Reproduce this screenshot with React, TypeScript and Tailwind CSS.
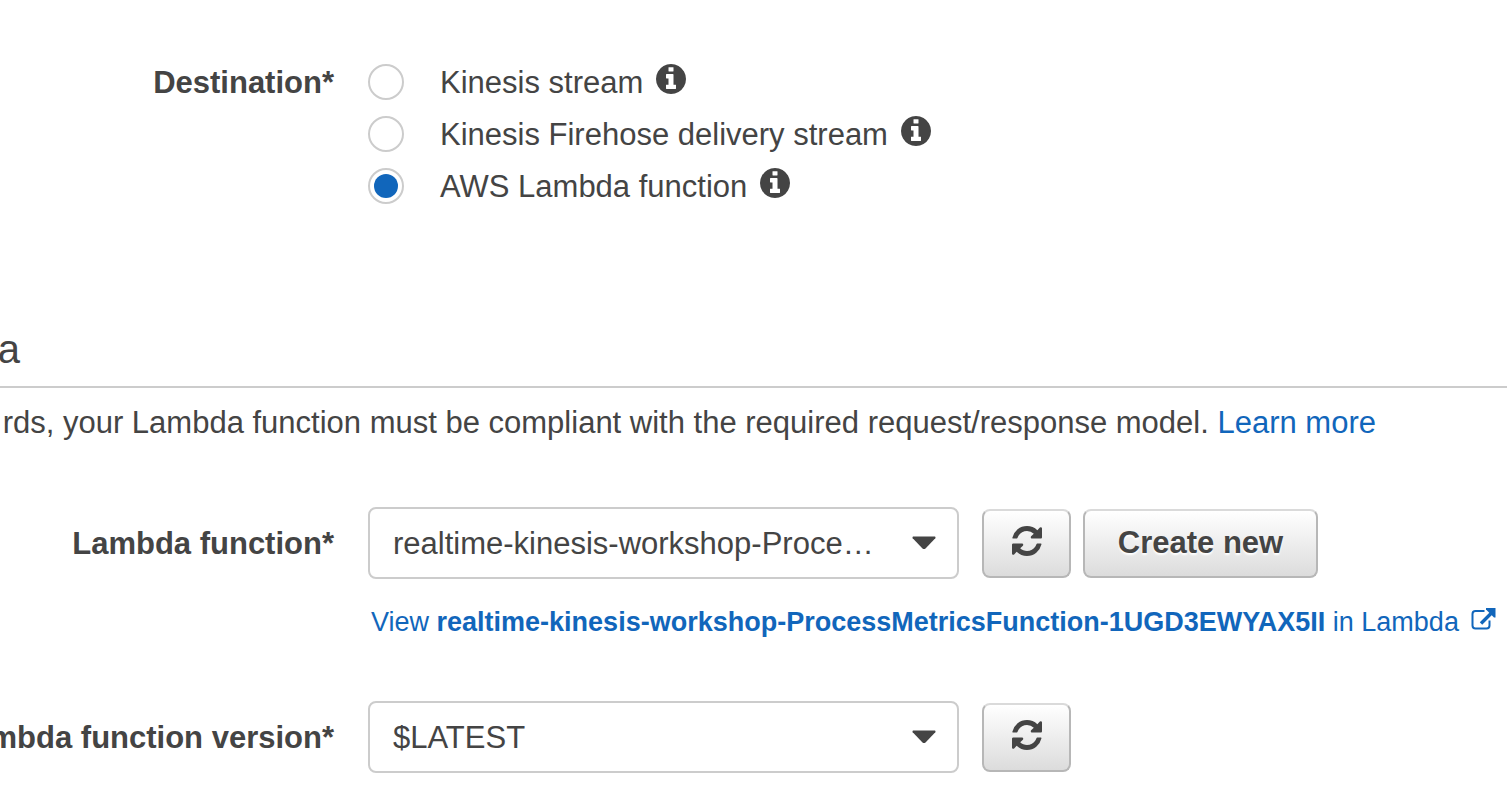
import type { ReactNode } from "react";

function InfoIcon() {
  return (
    <svg viewBox="0 128 1536 1536" className="mb-1.5 size-[30px] shrink-0" fill="currentColor" aria-hidden="true">
      <path d="M1024 1376v-160q0-14-9-23t-23-9h-96v-512q0-14-9-23t-23-9h-320q-14 0-23 9t-9 23v160q0 14 9 23t23 9h96v320h-96q-14 0-23 9t-9 23v160q0 14 9 23t23 9h448q14 0 23-9t9-23zm-128-896v-160q0-14-9-23t-23-9h-192q-14 0-23 9t-9 23v160q0 14 9 23t23 9h192q14 0 23-9t9-23zm640 416q0 209-103 385.5t-279.5 279.5-385.5 103-385.5-103-279.5-279.5-103-385.5 103-385.5 279.5-279.5 385.5-103 385.5 103 279.5 279.5 103 385.5z" />
    </svg>
  );
}

function RefreshIcon() {
  return (
    <svg viewBox="0 128 1536 1536" className="mb-1 size-[30px]" fill="currentColor" aria-hidden="true">
      <path d="M1511 1056q0 5-1 7-64 268-268 434.5t-478 166.5q-146 0-282.5-55t-243.5-157l-129 129q-19 19-45 19t-45-19-19-45v-448q0-26 19-45t45-19h448q26 0 45 19t19 45-19 45l-137 137q71 66 161 102t187 36q134 0 250-65t186-179q11-17 53-117 8-23 30-23h192q13 0 22.5 9.5t9.5 22.5zm25-800v448q0 26-19 45t-45 19h-448q-26 0-45-19t-19-45 19-45l138-138q-148-137-349-137-134 0-250 65t-186 179q-11 17-53 117-8 23-30 23h-199q-13 0-22.5-9.5t-9.5-22.5v-7q65-268 270-434.5t480-166.5q146 0 284 55.5t245 156.5l130-129q19-19 45-19t45 19 19 45z" />
    </svg>
  );
}

function ExternalIcon() {
  return (
    <svg viewBox="0 0 25 24" className="mb-1 h-6 w-[25px] shrink-0" fill="none" stroke="currentColor" aria-hidden="true">
      <path d="M13.500 4H4.500Q1.500 4 1.500 7v11.500q0 3 3 3h11q3 0 3-3v-5" strokeWidth="2" />
      <path d="M10 16.500 20 6.500" strokeWidth="3.400" />
      <path d="M15 1h9.500v9.500h-1.500l-8-8z" fill="currentColor" stroke="none" />
    </svg>
  );
}

function Row({ label, children }: { label: ReactNode; children: ReactNode }) {
  return (
    <div className="grid grid-cols-[334px_1fr] gap-x-[34px]">
      <div className="flex justify-end font-bold whitespace-nowrap">{label}</div>
      {children}
    </div>
  );
}

function Select({ id, value }: { id: string; value: string }) {
  return (
    <div className="grid w-[591px] shrink-0 items-center">
      <select
        id={id}
        className="col-start-1 row-start-1 h-[72px] w-full appearance-none overflow-hidden rounded-lg border-2 border-[#ccc] bg-white pt-0.5 pr-[72px] pl-[23px] text-ellipsis whitespace-nowrap"
      >
        <option>{value}</option>
      </select>
      <svg viewBox="0 0 24 14" className="pointer-events-none col-start-1 row-start-1 mr-[23px] h-[14px] w-6 justify-self-end" fill="currentColor" aria-hidden="true">
        <path d="M1 .5h22Q24 1 23.300 2.300L13.500 12.500Q12 13.500 10.500 12.500L.7 2.300Q0 1 1 .5z" />
      </svg>
    </div>
  );
}

const buttonBase =
  "flex h-[69px] items-center justify-center rounded-lg border-2 border-[#b7b7b7] border-t-[#dadada] bg-linear-to-b from-white to-[#dcdcdc] font-bold whitespace-nowrap text-shadow-[0_2px_2px_#fff]";

function RefreshButton({ label }: { label: string }) {
  return (
    <button type="button" aria-label={label} className={`${buttonBase} w-[89px]`}>
      <RefreshIcon />
    </button>
  );
}

const destinations = [
  { id: "stream", name: "Kinesis stream" },
  { id: "firehose", name: "Kinesis Firehose delivery stream" },
  { id: "lambda", name: "AWS Lambda function" },
];

export default function App() {
  return (
    <main className="min-h-screen overflow-hidden bg-white pt-14 font-['Liberation_Sans',Arial,sans-serif] text-[31px] leading-[54px] text-[#444]">
      <Row label={<span id="destination">Destination*</span>}>
        <div role="radiogroup" aria-labelledby="destination">
          {destinations.map(({ id, name }) => (
            <div key={id} className="flex h-[52px] items-center">
              <input
                type="radio"
                id={id}
                name="destination"
                defaultChecked={id === "lambda"}
                className="size-9 shrink-0 appearance-none rounded-full border-2 border-[#ccc] bg-clip-content p-1 checked:bg-[#16b]"
              />
              <label htmlFor={id} className="mr-[13px] ml-9 pt-0.5 whitespace-nowrap">
                {name}
              </label>
              <InfoIcon />
            </div>
          ))}
        </div>
      </Row>

      <header className="mt-[110px] border-b-2 border-[#ccc] pb-2.5">
        <h2 className="flex w-5 justify-end text-[40px]">a</h2>
      </header>
      <div className="mt-2 flex w-[1376px] justify-end">
        <p className="whitespace-nowrap">
          rds, your Lambda function must be compliant with the required request/response model.{" "}
          <a href="#model" className="text-[#16b]">
            Learn more
          </a>
        </p>
      </div>

      <div className="mt-[57px]">
        <Row label={<label htmlFor="function" className="leading-[74px]">Lambda function*</label>}>
          <div>
            <div className="flex items-center gap-3">
              <Select id="function" value="realtime-kinesis-workshop-ProcessMetricsFunction-1UGD3EWYAX5II" />
              <div className="ml-[11px] flex gap-3">
                <RefreshButton label="Refresh functions" />
                <button type="button" className={`${buttonBase} w-[235px]`}>
                  Create new
                </button>
              </div>
            </div>
            <a href="#function" className="mt-[22px] ml-[3px] flex h-10 items-center gap-3 text-[27px] leading-10 whitespace-nowrap text-[#16b]">
              <span className="pt-0.5">
                View <b>realtime-kinesis-workshop-ProcessMetricsFunction-1UGD3EWYAX5II</b> in Lambda
              </span>
              <ExternalIcon />
            </a>
          </div>
        </Row>
      </div>

      <div className="mt-[60px]">
        <Row label={<label htmlFor="version" className="-mb-0.5 leading-[74px]">mbda function version*</label>}>
          <div className="flex h-[72px] items-center gap-[23px]">
            <Select id="version" value="$LATEST" />
            <RefreshButton label="Refresh versions" />
          </div>
        </Row>
      </div>
    </main>
  );
}
